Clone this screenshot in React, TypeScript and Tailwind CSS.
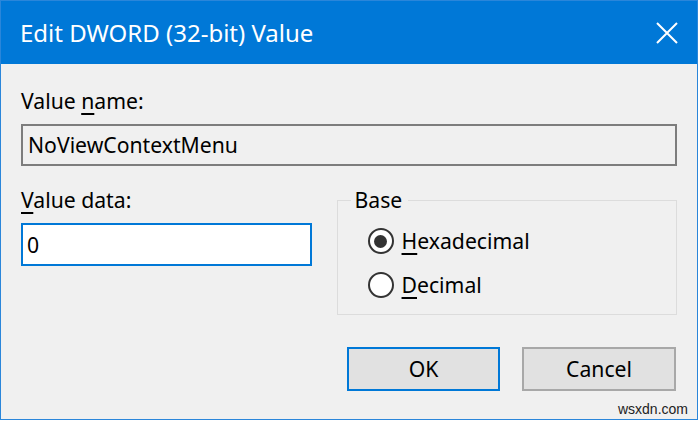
import React from "react";

function Radio({ checked, u, rest }: { checked: boolean; u: string; rest: string }) {
  return (
    <div className="flex h-[44px] items-center pl-[30px]">
      <div className="flex h-[26px] w-[26px] items-center justify-center rounded-full border-2 border-[#333333] bg-white">
        {checked && <div className="h-[13px] w-[13px] rounded-full bg-[#333333]" />}
      </div>
      <span className="ml-[8px] leading-[26px]">
        <span className="underline decoration-[2px] underline-offset-[4px]">{u}</span>
        {rest}
      </span>
    </div>
  );
}

export default function App() {
  return (
    <div
      className="h-[421px] w-[700px] bg-white text-[21.2px] text-black"
      style={{ fontFamily: '"Noto Sans", "Open Sans", sans-serif' }}
    >
      <div className="relative flex h-[420px] w-[698px] flex-col border border-[#2a86da] bg-[#f0f0f0]">
        {/* Title bar */}
        <div className="flex h-[63px] items-center justify-between bg-[#0078d7] pl-[19px] pr-[19px] text-white">
          <span className="text-[24px] leading-[26px]">Edit DWORD (32-bit) Value</span>
          <svg width="22" height="22" viewBox="0 0 22 22" className="mt-[1px]">
            <path d="M1 1 L21 21 M21 1 L1 21" stroke="white" strokeWidth="2" fill="none" />
          </svg>
        </div>

        {/* Body */}
        <div className="flex flex-1 flex-col pl-[20px] pr-[20px] pt-[24px]">
          <div className="leading-[26px]">
            Value <span className="underline decoration-[2px] underline-offset-[4px]">n</span>ame:
          </div>
          <div className="mt-[10px] flex h-[42px] items-center border-2 border-[#7d7d7d] bg-[#f0f0f0] pl-[5px] leading-[26px]">
            NoViewContextMenu
          </div>

          <div className="mt-[21px] flex">
            <div className="flex w-[291px] flex-col">
              <div className="leading-[26px]">
                <span className="underline decoration-[2px] underline-offset-[4px]">V</span>alue data:
              </div>
              <div className="mt-[10px] flex h-[43px] items-center border-2 border-[#0078d7] bg-white pl-[4px] leading-[26px]">
                0
              </div>
            </div>

            <fieldset className="ml-[25px] w-[341px] border border-[#dcdcdc] pb-[7px] pt-[6px]">
              <legend className="ml-[13px] pl-[4px] pr-[6px] leading-[26px]">Base</legend>
              <Radio checked u="H" rest="exadecimal" />
              <Radio checked={false} u="D" rest="ecimal" />
            </fieldset>
          </div>

          <div className="mt-[32px] flex justify-end gap-[22px] pr-[1px]">
            <button className="flex h-[44px] w-[153px] items-center justify-center border-2 border-[#0078d7] bg-[#e1e1e1] leading-[26px]">
              OK
            </button>
            <button className="flex h-[44px] w-[154px] items-center justify-center border-2 border-[#a8a8a8] bg-[#e1e1e1] leading-[26px]">
              Cancel
            </button>
          </div>
        </div>

        <div
          className="absolute bottom-[2px] right-[9px] text-[14px] leading-[16px] text-[#222222]"
          style={{ fontFamily: '"Liberation Sans", Arial, sans-serif' }}
        >
          wsxdn.com
        </div>
      </div>
    </div>
  );
}
